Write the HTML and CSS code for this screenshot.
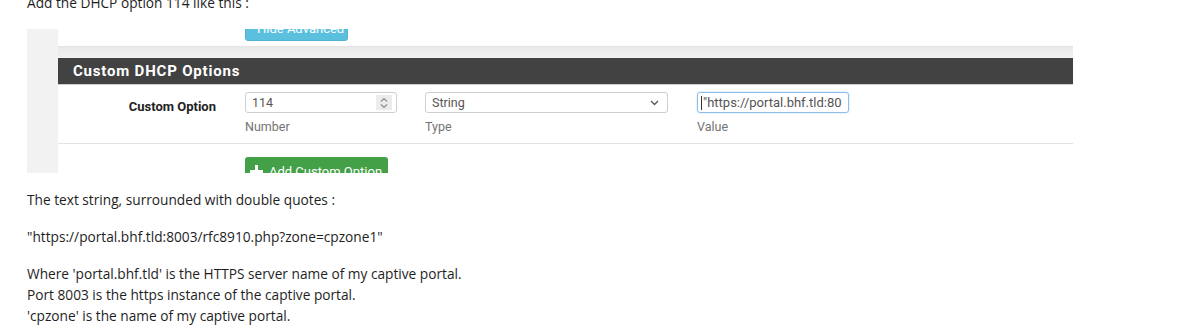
FILE: index.html
```html
<!DOCTYPE html>
<html>
<head>
<meta charset="utf-8">
<link rel="stylesheet" href="styles.css">
</head>
<body>
<div class="post">
  <p class="intro">Add the DHCP option 114 like this :</p>
  <div class="shot">
    <div class="strip"></div>
    <div class="panel">
      <div class="adv">
        <span class="btn btn-info">
          <svg width="13" height="13" viewBox="0 0 16 16"><path fill="#fff" d="M6.6 0h2.8l.4 2.2 1.3.6 1.9-1.3 2 2-1.3 1.9.6 1.3 2.2.4v2.8l-2.2.4-.6 1.3 1.3 1.9-2 2-1.9-1.3-1.3.6-.4 2.2H6.6l-.4-2.2-1.3-.6-1.9 1.3-2-2 1.3-1.9-.6-1.3L0 9.4V6.6l2.2-.4.6-1.3-1.3-1.9 2-2 1.9 1.3 1.3-.6zM8 5.2a2.8 2.8 0 1 0 0 5.6 2.8 2.8 0 0 0 0-5.6z"/></svg>
          Hide Advanced
        </span>
      </div>
      <div class="gap"></div>
      <div class="heading">Custom DHCP Options</div>
      <div class="row">
        <div class="label">Custom Option</div>
        <div class="field f-num">
          <div class="input">
            <span>114</span>
            <span class="spin">
              <svg width="8" height="12" viewBox="0 0 8 12"><path d="M1 4.5 4 1.5 7 4.5M1 7.5 4 10.5 7 7.5" fill="none" stroke="#8a8a8a" stroke-width="1.1"/></svg>
            </span>
          </div>
          <div class="help">Number</div>
        </div>
        <div class="field f-type">
          <div class="input">
            <span>String</span>
            <svg class="chev" width="9" height="6" viewBox="0 0 9 6"><path d="M1 1l3.5 3.5L8 1" fill="none" stroke="#555" stroke-width="1.3"/></svg>
          </div>
          <div class="help">Type</div>
        </div>
        <div class="field f-val">
          <div class="input focus">
            <span class="caret"></span><span class="val">"https://portal.bhf.tld:80</span>
          </div>
          <div class="help">Value</div>
        </div>
      </div>
      <div class="add">
        <span class="btn btn-success">
          <svg width="13" height="13" viewBox="0 0 13 13"><path d="M5 0h3v5h5v3H8v5H5V8H0V5h5z" fill="#fff"/></svg>
          Add Custom Option
        </span>
      </div>
    </div>
  </div>
  <p class="first">The text string, surrounded with double quotes :</p>
  <p>"https://portal.bhf.tld:8003/rfc8910.php?zone=cpzone1"</p>
  <p>Where 'portal.bhf.tld' is the HTTPS server name of my captive portal.<br>Port 8003 is the https instance of the captive portal.<br>'cpzone' is the name of my captive portal.</p>
</div>
</body>
</html>
```

FILE: styles.css
```css
html, body {
  margin: 0;
  padding: 0;
  background: #fff;
  overflow: hidden;
}

.post {
  padding-left: 27px;
  font-family: "Open Sans", "Noto Sans", sans-serif;
  font-size: 13.7px;
  line-height: 21px;
  color: #1e1e1e;
}

.post p {
  margin: 16px 0 0;
}

.post p.intro {
  margin-top: -8px;
}

.shot {
  margin-top: 16px;
  width: 1046px;
  height: 144px;
  display: flex;
  overflow: hidden;
  font-family: Roboto, sans-serif;
}

.strip {
  width: 31px;
  background: #f2f2f2;
}

.panel {
  flex: 1;
  display: flex;
  flex-direction: column;
  background: #fff;
  min-height: 0;
}

.panel > div {
  flex: none;
}

.adv {
  height: 17px;
  overflow: hidden;
  padding-left: 187px;
  display: flex;
  align-items: flex-start;
}

.btn {
  display: inline-flex;
  align-items: center;
  gap: 6px;
  padding: 0 5px;
  border-radius: 3px;
  color: #fff;
  font-size: 13px;
  white-space: nowrap;
  box-sizing: border-box;
  overflow: hidden;
  flex: none;
}

.btn-info {
  height: 30px;
  margin-top: -18px;
  width: 103px;
  background: #5bc0de;
  border: 1px solid #4fb3d3;
  padding-top: 5px;
}

.gap {
  height: 12px;
  background: linear-gradient(#e9e9e9, #f1f1f1);
  border-top: 1px solid #e4e4e4;
  box-sizing: border-box;
}

.heading {
  height: 27px;
  background: #424242;
  border-bottom: 1px solid #cfcfcf;
  box-sizing: border-box;
  color: #fff;
  font-weight: bold;
  font-size: 15px;
  letter-spacing: 0.8px;
  line-height: 26px;
  padding-left: 15px;
}

.row {
  display: flex;
  height: 59px;
  border-bottom: 1px solid #e3e3e3;
  box-sizing: border-box;
  padding-top: 7px;
}

.label {
  width: 158px;
  text-align: right;
  font-weight: bold;
  font-size: 13px;
  color: #222;
  line-height: 21px;
  padding-top: 4px;
}

.field {
  display: flex;
  flex-direction: column;
}

.f-num { width: 152px; margin-left: 29px; }
.f-type { width: 243px; margin-left: 28px; }
.f-val { width: 152px; margin-left: 29px; }

.input {
  height: 21px;
  border: 1px solid #cfcfcf;
  border-radius: 3px;
  box-sizing: border-box;
  display: flex;
  align-items: center;
  padding: 0 6px;
  font-size: 12.5px;
  color: #555;
  overflow: hidden;
  white-space: nowrap;
}

.f-num .input {
  justify-content: space-between;
  padding-right: 4px;
}

.spin {
  width: 16px;
  height: 15px;
  background: #ececec;
  display: flex;
  align-items: center;
  justify-content: center;
}

.f-type .input {
  justify-content: space-between;
  padding-right: 8px;
}

.input.focus {
  border-color: #8ebde8;
  box-shadow: 0 0 2px rgba(102, 175, 233, 0.5);
  padding-left: 3px;
}

.caret {
  width: 1px;
  height: 14px;
  background: #333;
  margin-right: 1px;
  flex: none;
}

.val {
  color: #555;
  font-size: 13px;
}

.help {
  margin-top: 5px;
  font-size: 12.5px;
  color: #737373;
  line-height: 18px;
}

.add {
  height: 30px;
  overflow: hidden;
  padding-left: 187px;
  padding-top: 13px;
}

.btn-success {
  height: 30px;
  width: 143px;
  background: #43a047;
  padding-bottom: 1px;
}
```
